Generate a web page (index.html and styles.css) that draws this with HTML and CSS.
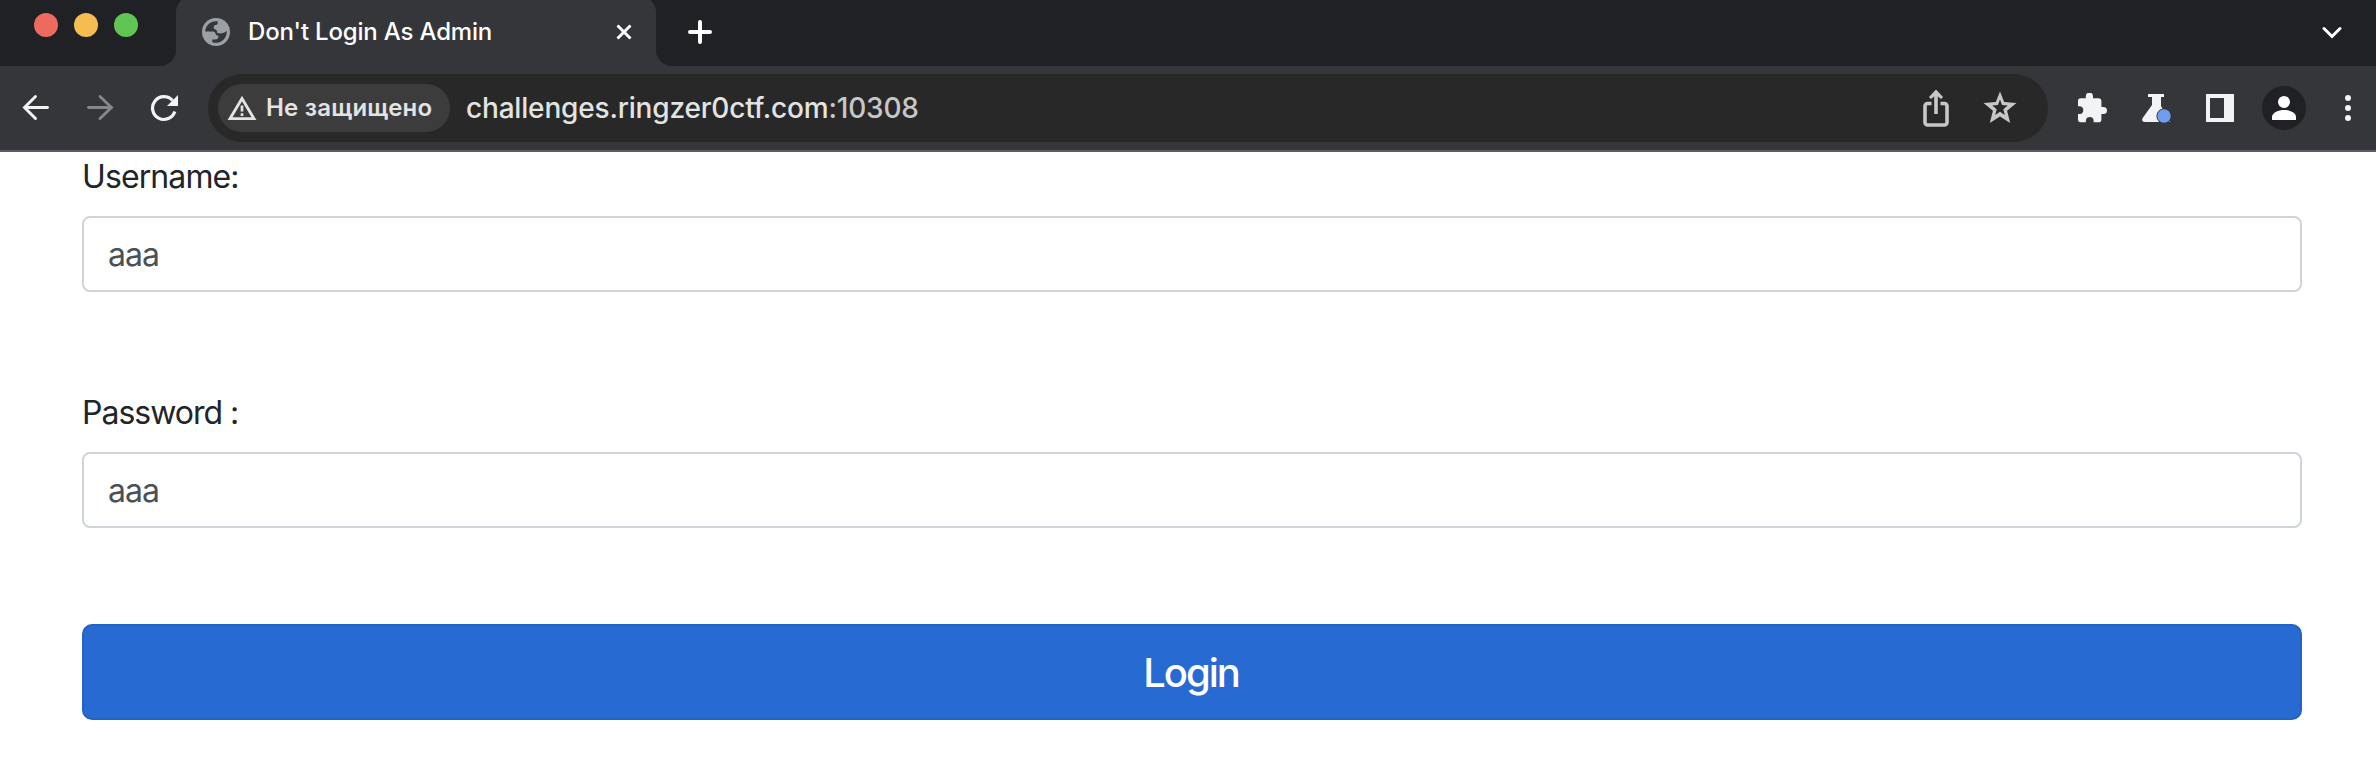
FILE: index.html
```html
<!DOCTYPE html>
<html lang="ru">
<head>
<meta charset="utf-8">
<title>Don't Login As Admin</title>
<link rel="stylesheet" href="styles.css">
</head>
<body>
<header class="browser">
  <div class="tabstrip">
    <div class="lights"><span class="light red"></span><span class="light yellow"></span><span class="light green"></span></div>
    <div class="tab">
      <svg class="globe" width="28" height="28" viewBox="0 0 28 28"><circle cx="14" cy="14" r="14" fill="#9aa0a6"/><path d="M3.200 13.500A10.800 10.800 0 0 1 15.700 3.300V5.500Q15.500 7 12.500 7.300Q11.300 9 12 11Q15 11 15.300 15Q21 16.500 24.700 13A10.800 10.800 0 0 1 10.300 24.200V21.500H13.500Q16.500 21 16.500 18.500Q16.500 17 14 17Q13.500 13.800 11 13.500Z" fill="#35363a"/></svg>
      <span class="tab-title">Don't Login As Admin</span>
      <svg class="close" width="16" height="16" viewBox="0 0 16 16"><path d="M1.500 1.500l13 13M14.500 1.500l-13 13" stroke="#fff" stroke-width="2.900"/></svg>
    </div>
    <svg class="plus" width="24" height="24" viewBox="0 0 24 24"><path d="M12 2v20M2 12h20" stroke="#fff" stroke-width="4" stroke-linecap="round"/></svg>
    <svg class="chevron" width="20" height="14" viewBox="0 0 20 14"><path d="M2 2.500l8 8 8-8" fill="none" stroke="#fff" stroke-width="3" stroke-linecap="round"/></svg>
  </div>
  <div class="toolbar">
    <nav class="nav">
      <svg width="28" height="28" viewBox="0 0 28 28"><path d="M25.500 13.500H3M13.500 2.500L2.500 13.500 13.500 24.500" fill="none" stroke="#f1f3f4" stroke-width="2.900" stroke-linecap="round"/></svg>
      <svg width="28" height="28" viewBox="0 0 28 28"><path d="M2.500 13.500H25M14 2.500L25.500 13.500 14 24.500" fill="none" stroke="#86878a" stroke-width="2.900" stroke-linecap="round"/></svg>
      <svg width="28" height="28" viewBox="0 0 28 28"><path d="M22.500 6.500A11.400 11.400 0 1 0 24.800 17.500" fill="none" stroke="#f1f3f4" stroke-width="3.200"/><path d="M28 1v11H17z" fill="#f1f3f4"/></svg>
    </nav>
    <div class="omnibox">
      <div class="chip">
        <svg width="30" height="26" viewBox="0 0 30 26"><path d="M15 3.500L27 23.700H3z" fill="none" stroke="#e3e3e3" stroke-width="2.800"/><path d="M15 10.500v6M15 18.200v2.800" stroke="#e3e3e3" stroke-width="2.700"/></svg>
        <span class="chip-text">Не защищено</span>
      </div>
      <div class="url">challenges.ringzer0ctf.com<span class="port">:10308</span></div>
      <svg class="share" width="26" height="38" viewBox="0 0 26 38"><path d="M8.500 14.500H4.500a2.500 2.500 0 0 0-2.500 2.500v16.500A2.500 2.500 0 0 0 4.500 36h17a2.500 2.500 0 0 0 2.500-2.500V17a2.500 2.500 0 0 0-2.500-2.500h-4M13 25V4" fill="none" stroke="#c7c7c7" stroke-width="3.600"/><path d="M6 8l7-7.500L20 8l-2 2-5-4-5 4z" fill="#c7c7c7"/></svg>
      <svg class="star" width="34" height="34" viewBox="0 0 34 34"><path fill-rule="evenodd" d="M17 .5l4.200 10.600 12.300.9-9.400 7.800 3.100 12.200L17 25.500 6.800 32l3.100-12.200L.5 12l12.300-.9zM17 8.500l-2 5.500-5.700.5 4.400 3.700-1.500 5.700 4.800-3.100 4.800 3.100-1.500-5.700 4.400-3.700L19 14z" fill="#c7c7c7"/></svg>
    </div>
    <div class="actions">
      <svg class="ext" width="30" height="30" viewBox="0 0 30 30"><path d="M25.700 14.300h-2V8.600a3 3 0 0 0-3-3h-5.400v-2a3.600 3.600 0 0 0-7.200 0v2H3a2.700 2.700 0 0 0-2.700 2.800v5.300h2a3.900 3.900 0 0 1 0 7.700h-2v5.400A2.700 2.700 0 0 0 3 29.600h5.200v-2a3.900 3.900 0 0 1 7.700 0v2h5a2.800 2.800 0 0 0 2.800-2.800v-5.300h2a3.600 3.600 0 0 0 0-7.200z" transform="translate(.7 -.4)" fill="#f1f3f4"/></svg>
      <svg class="flask" width="30" height="30" viewBox="0 0 30 30"><path d="M6 1h16v3h-3v9l9 16H3c-2.600 0-3.500-2-2.300-4L10 12V4H6z" fill="#f1f3f4"/><circle cx="22" cy="23" r="7.600" fill="#35363a"/><circle cx="22" cy="23" r="6.700" fill="#6f9df3"/></svg>
      <svg class="panel" width="28" height="28" viewBox="0 0 28 28"><path d="M0 0h28v28H0zM4 4v20h14V4z" fill="#f1f3f4" fill-rule="evenodd"/></svg>
      <div class="avatar"><svg width="24" height="24" viewBox="0 0 24 24"><circle cx="12" cy="6" r="6" fill="#fff"/><path d="M0 24v-3c0-4.500 7-7 12-7s12 2.500 12 7v3z" fill="#fff"/></svg></div>
      <svg class="dots" width="6" height="26" viewBox="0 0 6 26"><circle cx="3" cy="3" r="3" fill="#f1f3f4"/><circle cx="3" cy="13" r="3" fill="#f1f3f4"/><circle cx="3" cy="23" r="3" fill="#f1f3f4"/></svg>
    </div>
  </div>
</header>
<main class="page">
  <form class="login">
    <label class="label user" for="u">Username:</label>
    <input class="field" id="u" type="text" value="aaa">
    <label class="label pass" for="p">Password :</label>
    <input class="field" id="p" type="text" value="aaa">
    <button class="submit" type="button"><span>Login</span></button>
  </form>
</main>
</body>
</html>
```
FILE: styles.css
```css
* { box-sizing: border-box; }
body { margin: 0; height: 766px; overflow: hidden; background: #fff; font-family: Inter, "Liberation Sans", sans-serif; }
svg { display: block; flex: none; }
.tabstrip { display: flex; height: 66px; background: #202124; overflow: hidden; }
.lights { display: flex; gap: 16px; width: 176px; padding: 13px 0 0 34px; }
.light { width: 24px; height: 24px; border-radius: 50%; }
.red { background: #ed6a5e; }
.yellow { background: #f5bd4f; }
.green { background: #61c554; }
.tab { position: relative; display: flex; width: 480px; height: 70px; margin-top: -4px; padding: 4px 24px 4px 26px; align-items: center; background: #35363a; border-radius: 16px 16px 0 0; }
.tab::before, .tab::after { content: ""; position: absolute; bottom: 0; width: 16px; height: 16px; }
.tab::before { left: -16px; background: radial-gradient(circle at 0 0, #202124 15.5px, #35363a 16.5px); }
.tab::after { right: -16px; background: radial-gradient(circle at 100% 0, #202124 15.5px, #35363a 16.5px); }
.tab-title { margin: 1px auto 0 18px; font-size: 24px; font-weight: 450; letter-spacing: -0.18px; line-height: 32px; color: #fff; white-space: nowrap; }
.globe, .close { margin-bottom: -2px; }
.plus { margin: 20px 0 0 32px; }
.chevron { margin: 26px 34px 0 auto; }
.toolbar { display: flex; height: 86px; padding: 8px 25px 0 22px; background: #35363a; border-bottom: 2px solid #5f5b62; }
.nav { display: flex; width: 186px; gap: 36px; padding-top: 20px; }
.omnibox { display: flex; width: 1840px; height: 68px; padding: 0 32px 0 10px; align-items: center; border-radius: 34px; background: #282828; }
.chip { display: flex; width: 232px; height: 48px; padding-left: 9px; gap: 9px; align-items: center; border-radius: 24px; background: #3c3c3c; }
.chip-text { font-size: 24px; font-weight: 600; letter-spacing: 0.22px; line-height: 32px; color: #e3e3e3; white-space: nowrap; }
.url { margin-left: 16px; margin-right: auto; font-size: 28px; font-weight: 450; letter-spacing: -0.18px; line-height: 36px; color: #e3e3e3; white-space: nowrap; }
.port { color: #c7c7c7; }
.star { margin-left: 34px; margin-right: -1px; }
.actions { display: flex; flex: 1; height: 68px; padding-left: 29px; align-items: center; }
.flask { margin-left: 35px; }
.panel { margin-left: 34px; }
.avatar { display: grid; place-items: center; width: 44px; height: 44px; margin-left: 28px; border-radius: 50%; background: #202124; }
.dots { margin-left: auto; }
.login { display: flex; flex-direction: column; padding: 0 74px 0 82px; }
.label { height: 48px; padding-top: 1px; font-size: 32px; letter-spacing: -0.9px; line-height: 48px; color: #212529; white-space: nowrap; }
.user { margin: 0 0 16px; }
.pass { margin: 96px 0 16px; letter-spacing: -1px; }
.field { height: 76px; margin: 0; padding: 1px 24px 0; border: 2px solid #ced4da; border-radius: 8px; font: 32px Inter, "Liberation Sans", sans-serif; letter-spacing: -1px; color: #495057; background: #fff; }
.submit { height: 96px; margin: 96px 0 0; padding: 1px 8px 0 6px; border: 2px solid #2463c4; border-radius: 10px; background: #276ad2; color: #fff; font: 450 40px/60px Inter, "Liberation Sans", sans-serif; letter-spacing: -2px; }
```
